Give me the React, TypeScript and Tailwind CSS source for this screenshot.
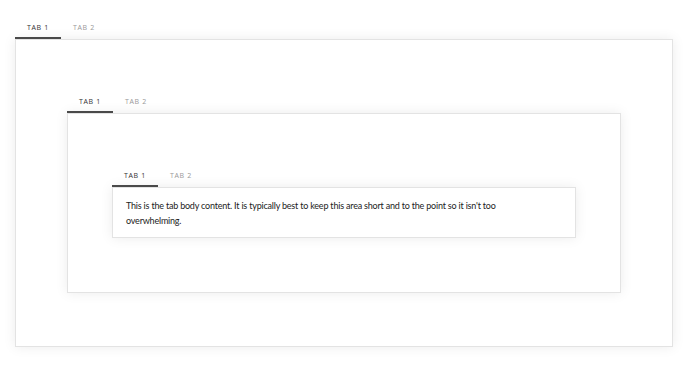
import React from "react";

function TabStrip() {
  return (
    <div className="flex h-[23px]">
      <div className="relative flex w-[46px] items-center justify-center pt-[2px] text-[7px] tracking-[0.7px] text-[#333] font-['Open_Sans',sans-serif]">
        TAB 1
        <div className="absolute bottom-0 left-0 right-0 h-[2px] bg-[#4a4a4a]" />
      </div>
      <div className="flex w-[46px] items-center justify-center pt-[2px] text-[7px] tracking-[0.7px] text-[#999] font-['Open_Sans',sans-serif]">
        TAB 2
      </div>
    </div>
  );
}

export default function App() {
  return (
    <div className="h-[370px] w-[690px] bg-white pl-[15px] pr-[17px] pt-[16px]">
      <TabStrip />
      <div className="h-[308px] border border-[#e3e3e3] bg-white pt-[50px] px-[51px] shadow-[0_0_12px_rgba(0,0,0,0.08)]">
        <TabStrip />
        <div className="h-[180px] border border-[#e3e3e3] bg-white pt-[50px] px-[44px] shadow-[0_0_12px_rgba(0,0,0,0.08)]">
          <TabStrip />
          <div className="h-[51px] border border-[#e3e3e3] bg-white pl-[13px] pr-[40px] pt-[10px] shadow-[0_0_12px_rgba(0,0,0,0.08)]">
            <p className="text-[9px] leading-[15px] tracking-[-0.2px] text-[#222] font-['Lato',sans-serif]">
              This is the tab body content. It is typically best to keep this area short and to the point so it isn't too overwhelming.
            </p>
          </div>
        </div>
      </div>
    </div>
  );
}
